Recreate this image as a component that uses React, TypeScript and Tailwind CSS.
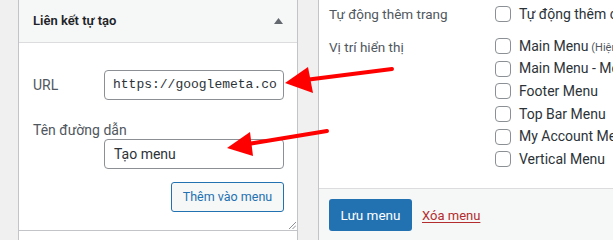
import React from 'react'

const font = { fontFamily: 'Roboto, "Noto Sans", sans-serif' }

function Checkbox() {
  return (
    <span className="block w-4 h-4 shrink-0 rounded-[4px] border border-[#8c8f94] bg-white" />
  )
}

const locations = [
  { name: 'Main Menu', note: '(Hiện tại đang đặt là: Main Menu)' },
  { name: 'Main Menu - Mobile' },
  { name: 'Footer Menu' },
  { name: 'Top Bar Menu' },
  { name: 'My Account Menu' },
  { name: 'Vertical Menu' },
]

export default function App() {
  return (
    <div
      className="relative w-[613px] h-[240px] overflow-hidden bg-[#f0f0f1] flex text-[14px]"
      style={font}
    >
      <div className="w-[18px] shrink-0" />

      {/* left column */}
      <div className="w-[280px] shrink-0 flex flex-col">
        <div className="border-x border-b border-[#c3c4c7] bg-white flex flex-col h-[231px]">
          <div className="h-[43px] shrink-0 bg-[#f6f7f7] border-b border-[#dcdcde] flex items-center justify-between pl-[14px] pr-[13px]">
            <span className="text-[13px] font-semibold text-[#1d2327]">Liên kết tự tạo</span>
            <svg width="9" height="6" viewBox="0 0 9 6" className="mr-[1px]">
              <polygon points="4.5,0 9,6 0,6" fill="#646970" />
            </svg>
          </div>
          <div className="relative flex-1 pl-[14px] pr-[13px] pt-[27px]">
            <div className="flex items-center">
              <span className="w-[71px] text-[#50575e]">URL</span>
              <div className="w-[180px] h-[30px] rounded-[4px] border border-[#8c8f94] flex items-center px-[8px] overflow-hidden">
                <span className="whitespace-nowrap text-[13px] text-[#2c3338]" style={{ fontFamily: '"Liberation Mono", monospace' }}>
                  https://googlemeta.co
                </span>
              </div>
            </div>
            <div className="mt-[21px] text-[#50575e] leading-[18px]">Tên đường dẫn</div>
            <div className="ml-[71px] w-[180px] h-[30px] rounded-[4px] border border-[#8c8f94] flex items-center px-[9px] text-[14px] text-[#2c3338]">
              Tạo menu
            </div>
            <div className="flex justify-end mt-[13px]">
              <span className="h-[30px] w-[113px] justify-center rounded-[3px] border border-[#2271b1] bg-[#f6f7f7] text-[12.5px] text-[#2271b1] flex items-center">
                Thêm vào menu
              </span>
            </div>
            <svg width="8" height="8" viewBox="0 0 8 8" className="absolute right-[1px] bottom-[1px]">
              <line x1="1" y1="8" x2="8" y2="1" stroke="#8c8f94" strokeWidth="1" />
              <line x1="4.5" y1="8" x2="8" y2="4.5" stroke="#8c8f94" strokeWidth="1" />
            </svg>
          </div>
        </div>
        <div className="flex-1 border-x border-[#c3c4c7] bg-white" />
      </div>

      <div className="w-[20px] shrink-0" />

      {/* right column */}
      <div className="flex-1 flex flex-col border-l border-[#c3c4c7] bg-white">
        <div className="h-[188px] shrink-0 pl-[10px] pt-[5px] flex flex-col">
          <div className="flex items-center h-[18px]">
            <span className="w-[166px] shrink-0 text-[13.5px] text-[#50575e]">Tự động thêm trang</span>
            <Checkbox />
            <span className="ml-[8px] whitespace-nowrap text-[#2c3338]">Tự động thêm các trang cấp cao nhất mới vào menu này</span>
          </div>
          <div className="flex mt-[12px]">
            <span className="w-[166px] shrink-0 text-[13.5px] text-[#50575e] pt-[2px]">Vị trí hiển thị</span>
            <div className="flex flex-col">
              {locations.map((l) => (
                <div key={l.name} className="flex items-center h-[22.6px]">
                  <Checkbox />
                  <span className="ml-[8px] whitespace-nowrap text-[#2c3338]">
                    {l.name}
                    {l.note && <span className="text-[11px] text-[#50575e]"> {l.note}</span>}
                  </span>
                </div>
              ))}
            </div>
          </div>
        </div>
        <div className="flex-1 border-t border-[#dcdcde] bg-[#f6f7f7] flex items-start pl-[10px] pt-[10px] gap-[10px]">
          <span className="h-[32px] w-[83px] justify-center rounded-[3px] bg-[#2271b1] text-white text-[13.5px] flex items-center">
            Lưu menu
          </span>
          <span className="mt-[7px] text-[13px] text-[#b32d2e] underline underline-offset-2">Xóa menu</span>
        </div>
      </div>

      {/* annotation arrows */}
      <svg className="absolute inset-0 pointer-events-none" width="613" height="240">
        <line x1="392" y1="69" x2="305" y2="80" stroke="#f00" strokeWidth="4" strokeLinecap="round" />
        <polygon points="285,83 308,67 313,93" fill="#f00" />
        <line x1="327" y1="131" x2="248" y2="144" stroke="#f00" strokeWidth="4" strokeLinecap="round" />
        <polygon points="227,148 250,132 253,156" fill="#f00" />
      </svg>
    </div>
  )
}
